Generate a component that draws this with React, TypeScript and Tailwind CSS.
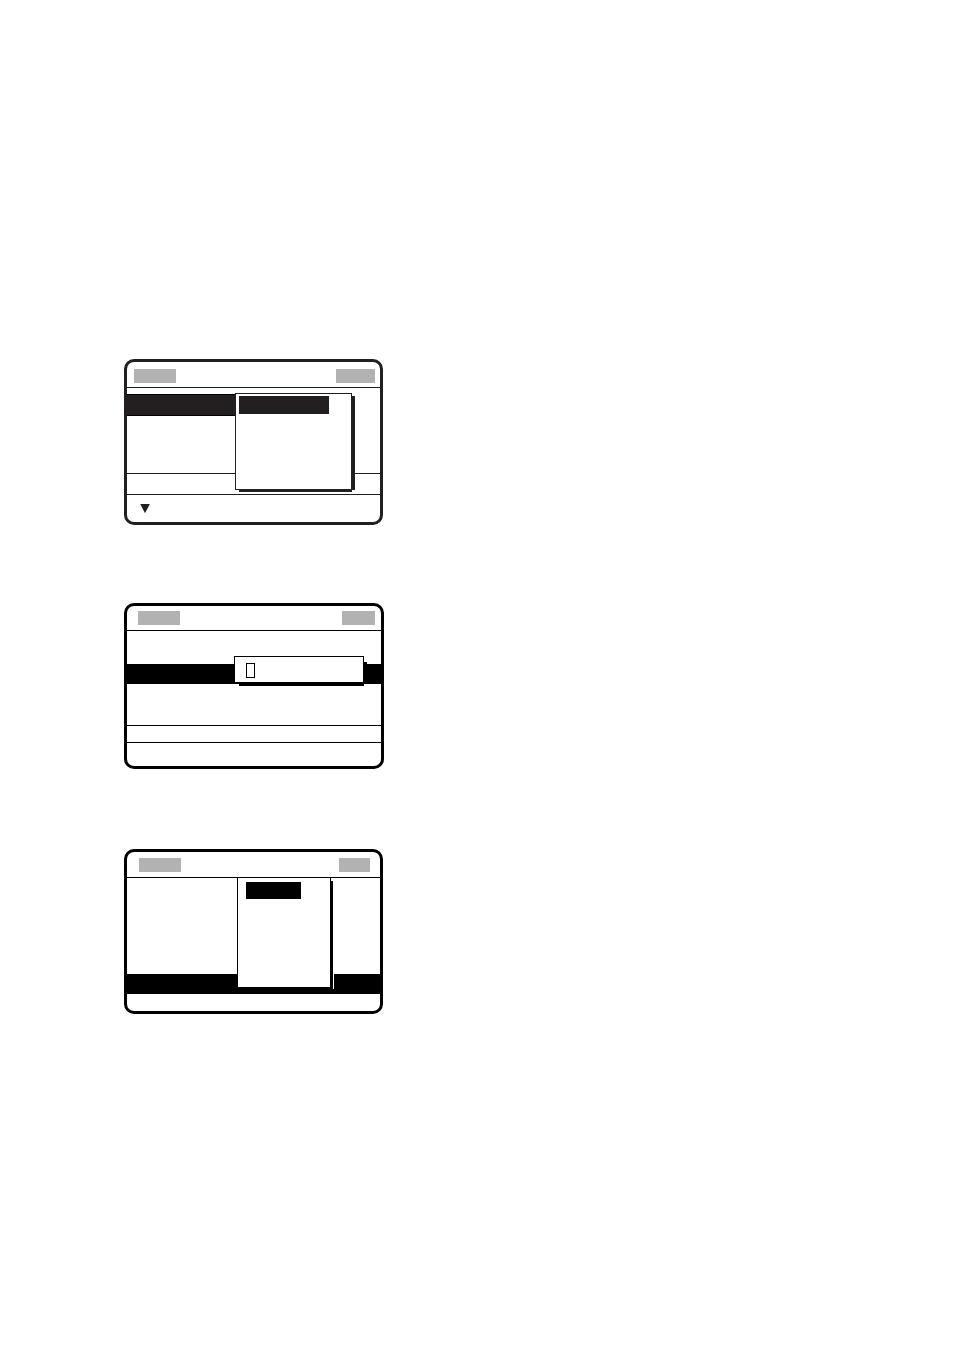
import type { ReactNode } from "react";

function Screen({ className, children }: { className: string; children: ReactNode }) {
  return (
    <section className={`relative flex flex-col rounded-[10px] border-[3px] ${className}`}>
      {children}
    </section>
  );
}

function Header({ className, right }: { className: string; right: string }) {
  return (
    <header className={`flex shrink-0 items-start justify-between border-b ${className}`}>
      <span className="h-3.5 w-[42px] bg-[#b2b2b2]" />
      <span className={`h-3.5 bg-[#b2b2b2] ${right}`} />
    </header>
  );
}

function MenuScreen() {
  return (
    <Screen className="h-[166px] w-[259px] border-[#231f20]">
      <Header className="h-[26px] border-[#231f20] pt-[7px] pr-[5px] pl-[7px]" right="w-[39px]" />
      <div className="flex grow flex-col pt-1.5">
        <div className="h-[22px] w-[109px] border-y border-black bg-[#231f20]" />
      </div>
      <div className="h-[22px] border-y border-[#231f20]" />
      <footer className="h-[27px] pt-[9px] pl-[13px]">
        <svg className="h-[10px] w-[10px]" viewBox="0 0 10 10" aria-hidden="true">
          <path d="M0.3 0H9.8L5 9.3Z" fill="#231f20" />
        </svg>
      </footer>
      <div className="absolute top-[31px] left-[108px] h-[97px] w-[117px] border border-[#231f20] bg-white px-[3px] pt-0.5">
        <div className="h-[18px] w-[90px] bg-[#231f20]" />
        <span className="absolute top-0.5 -right-1 -bottom-px w-[3px] bg-[#231f20]" />
        <span className="absolute -right-px -bottom-[3px] left-[3px] h-0.5 bg-[#231f20]" />
      </div>
    </Screen>
  );
}

function EntryScreen() {
  return (
    <Screen className="h-[166px] w-[260px] border-black">
      <Header className="h-[25px] border-black pt-[5px] pr-1.5 pl-[11px]" right="w-[33px]" />
      <div className="grow pt-[33px]">
        <div className="h-5 bg-black" />
      </div>
      <div className="h-[18px] border-y border-black" />
      <footer className="h-[23px]" />
      <div className="absolute top-[50px] left-[107px] h-[27px] w-[130px] border border-black bg-white pt-1.5 pl-[11px]">
        <div className="h-[15px] w-[9px] border border-black" />
        <span className="absolute top-[5px] -right-1 bottom-0 w-[3px] bg-black" />
        <span className="absolute -right-px -bottom-1 left-1 h-[3px] bg-black" />
      </div>
    </Screen>
  );
}

function ListScreen() {
  return (
    <Screen className="h-[165px] w-[259px] border-black">
      <Header className="h-[26px] border-black pt-1.5 pr-2.5 pl-3" right="w-[31px]" />
      <div className="grow" />
      <div className="h-5 bg-black" />
      <footer className="h-[17px]" />
      <div className="absolute top-[25px] left-[110px] h-[111px] w-[94px] border border-black bg-white pt-1 pl-2">
        <div className="h-[17px] w-[55px] bg-black" />
        <span className="absolute top-[3px] -right-[3px] -bottom-0.5 w-[3px] bg-black" />
      </div>
      <span className="absolute top-[122px] left-[206px] h-[15px] w-px bg-white" />
    </Screen>
  );
}

export default function App() {
  return (
    <main className="flex min-h-screen flex-col items-start bg-white pt-[359px] pb-[336px] pl-[124px]">
      <div className="flex flex-col">
        <MenuScreen />
        <div className="pt-[78px] pb-20">
          <EntryScreen />
        </div>
        <ListScreen />
      </div>
    </main>
  );
}
